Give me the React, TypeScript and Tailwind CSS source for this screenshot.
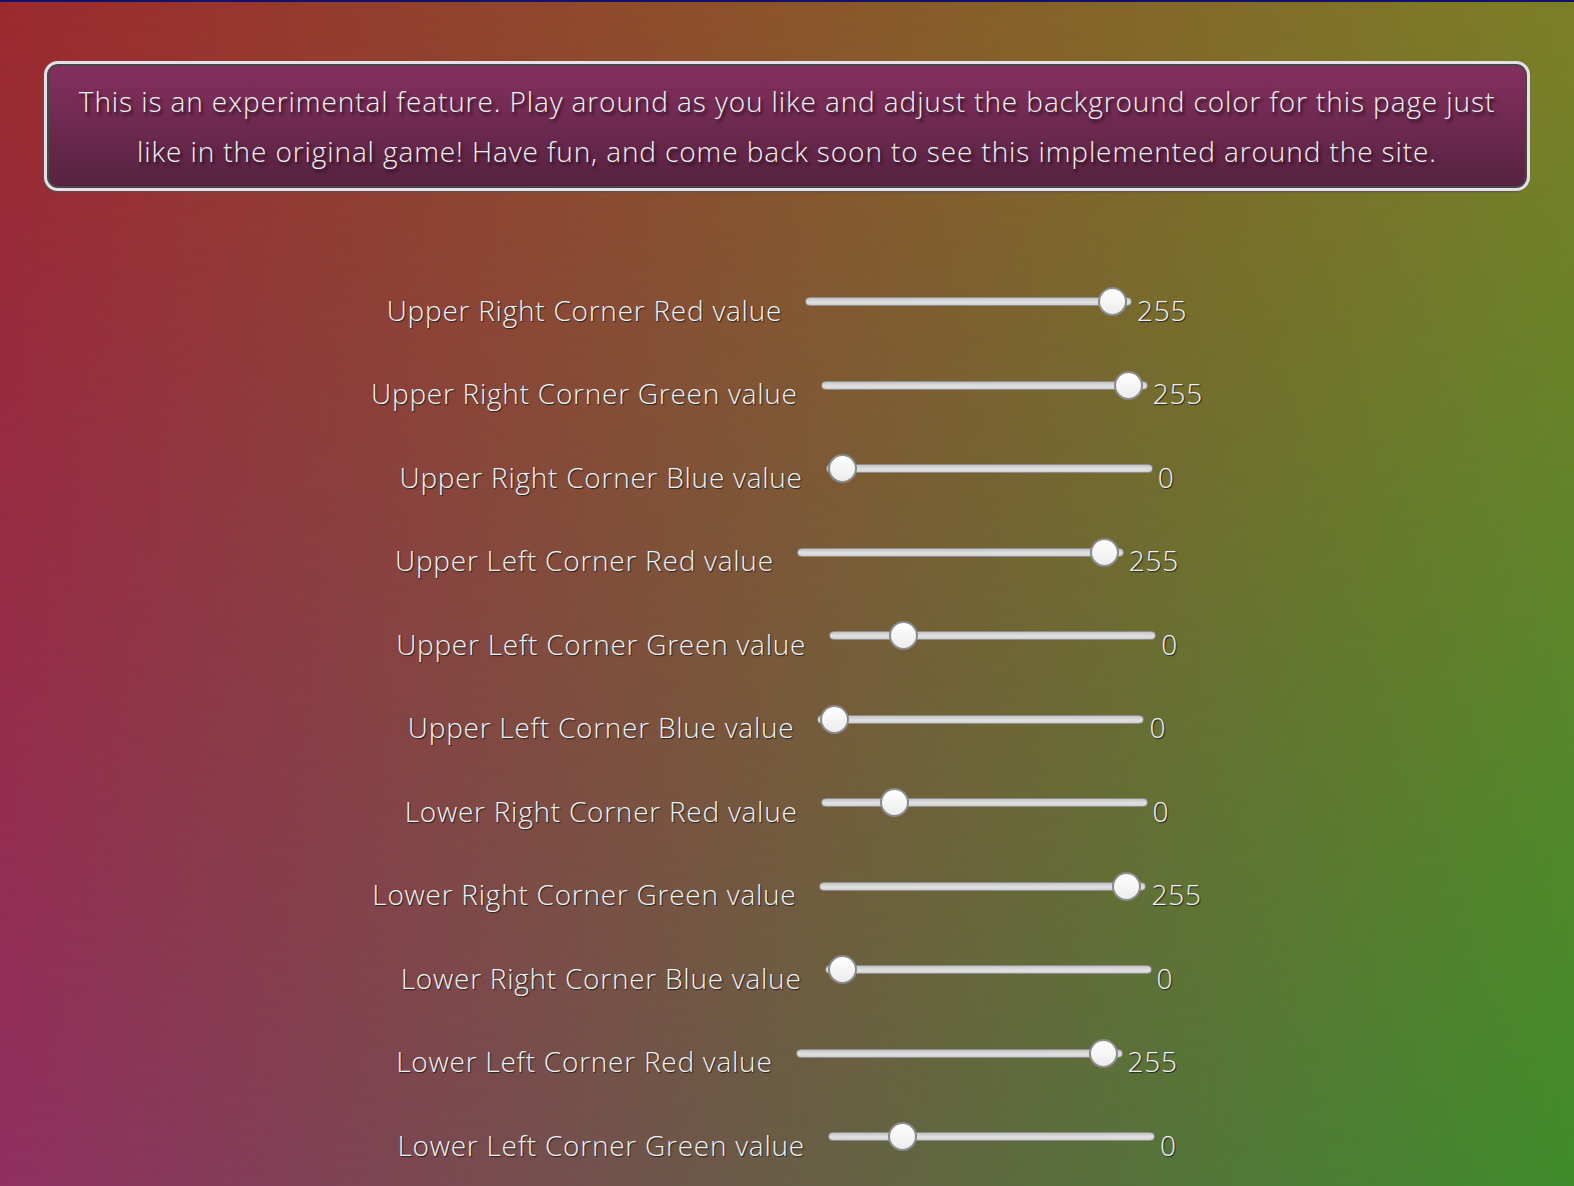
const rows = [
  { label: 'Upper Right Corner Red value', value: 255, pos: 293 },
  { label: 'Upper Right Corner Green value', value: 255, pos: 293 },
  { label: 'Upper Right Corner Blue value', value: 0, pos: 2 },
  { label: 'Upper Left Corner Red value', value: 255, pos: 293 },
  { label: 'Upper Left Corner Green value', value: 0, pos: 60 },
  { label: 'Upper Left Corner Blue value', value: 0, pos: 3 },
  { label: 'Lower Right Corner Red value', value: 0, pos: 59 },
  { label: 'Lower Right Corner Green value', value: 255, pos: 293 },
  { label: 'Lower Right Corner Blue value', value: 0, pos: 3 },
  { label: 'Lower Left Corner Red value', value: 255, pos: 293 },
  { label: 'Lower Left Corner Green value', value: 0, pos: 60 },
];

const Slider = ({ pos }: { pos: number }) => (
  <div className="relative mb-4 h-[29px] w-[327px] shrink-0">
    <div className="absolute left-0 right-0 top-[10px] h-[9px] rounded-full border border-[#8c8c8c] bg-[linear-gradient(to_bottom,#c4c4c4,#e2e2e2_60%,#cfcfcf)]" />
    <div
      className="absolute top-0 h-[29px] w-[29px] rounded-full border-2 border-[#8a8a8a] bg-[linear-gradient(to_bottom,#ffffff,#ececec)]"
      style={{ left: pos }}
    />
  </div>
);

export default function App() {
  return (
    <div className="relative h-screen overflow-hidden bg-[linear-gradient(to_right,#9c2a2f,#7c7f27)] font-['Open_Sans','Noto_Sans',sans-serif] font-light text-[#f2f2f2]">
      <div className="absolute inset-0 bg-[linear-gradient(to_right,#902f60,#3f8c2c)] [mask-image:linear-gradient(to_bottom,transparent,black)]" />
      <div className="relative">
        <div className="h-[2px] bg-[#12126c]" />

        <div className="mx-[44px] mt-[59px] rounded-[14px] border-[3px] border-[#e8e0e8] bg-[linear-gradient(to_bottom,#85305f,#55223f)] px-[18px] pt-[12px] pb-[12px] text-center text-[28px] leading-[50px] tracking-[0.9px] shadow-[inset_0_0_0_2px_#474747,-1px_1px_2px_#555] [text-shadow:2px_3px_3px_#2a0f1f]">
          This is an experimental feature. Play around as you like and adjust the background color for this page just like in the original game! Have fun, and come back soon to see this implemented around the site.
        </div>

        <div className="mt-[77px] flex flex-col">
          {rows.map((row, i) => (
            <div key={i} className="flex h-[83.5px] items-center justify-center text-[28px] tracking-[0.75px] [text-shadow:1px_1px_1px_#222]">
              <span className="mr-[23px]">{row.label}</span>
              <Slider pos={row.pos} />
              <span className="ml-[5px]">{row.value}</span>
            </div>
          ))}
        </div>
      </div>
    </div>
  );
}
